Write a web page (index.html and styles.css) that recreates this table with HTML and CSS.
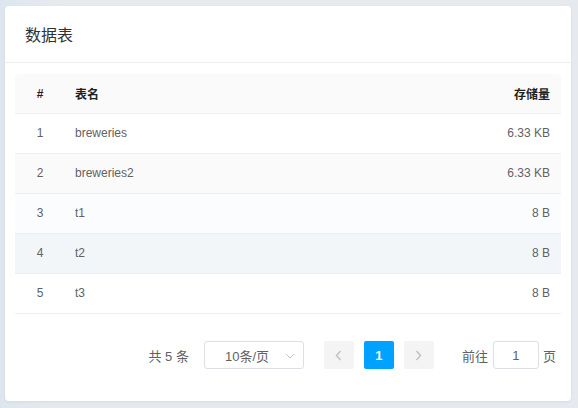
FILE: index.html
```html
<!DOCTYPE html>
<html lang="zh">
<head>
<meta charset="utf-8">
<link rel="stylesheet" href="styles.css">
</head>
<body>
<div class="card">
  <div class="card-header">数据表</div>
  <div class="card-body">
    <table class="tbl">
      <thead>
        <tr><th class="c-idx">#</th><th class="c-name">表名</th><th class="c-size">存储量</th></tr>
      </thead>
      <tbody>
        <tr class="r-white"><td class="c-idx">1</td><td class="c-name">breweries</td><td class="c-size">6.33 KB</td></tr>
        <tr class="r-stripe"><td class="c-idx">2</td><td class="c-name">breweries2</td><td class="c-size">6.33 KB</td></tr>
        <tr class="r-light"><td class="c-idx">3</td><td class="c-name">t1</td><td class="c-size">8 B</td></tr>
        <tr class="r-hover"><td class="c-idx">4</td><td class="c-name">t2</td><td class="c-size">8 B</td></tr>
        <tr class="r-white"><td class="c-idx">5</td><td class="c-name">t3</td><td class="c-size">8 B</td></tr>
      </tbody>
    </table>
    <div class="pager">
      <span class="total">共 5 条</span>
      <div class="sizes"><span class="sizes-text">10条/页</span><svg class="caret" width="10" height="6" viewBox="0 0 10 6"><path d="M1 1l4 4 4-4" fill="none" stroke="#c0c4cc" stroke-width="1"/></svg></div>
      <button class="pbtn prev"><svg width="7" height="11" viewBox="0 0 7 11"><path d="M5.5 1L1.5 5.5l4 4.5" fill="none" stroke="#c0c4cc" stroke-width="1.6"/></svg></button>
      <button class="pbtn active">1</button>
      <button class="pbtn next"><svg width="7" height="11" viewBox="0 0 7 11"><path d="M1.5 1l4 4.5-4 4.5" fill="none" stroke="#c0c4cc" stroke-width="1.6"/></svg></button>
      <span class="jump">前往<span class="jump-input">1</span>页</span>
    </div>
  </div>
</div>
</body>
</html>
```

FILE: styles.css
```css
html, body {
  margin: 0;
  padding: 0;
}
body {
  background: linear-gradient(90deg, #dde6ee 0%, #e6eaee 10%, #e6e9ed 100%);
  width: 578px;
  height: 408px;
  padding: 6px 7px 0 5px;
  box-sizing: border-box;
  font-family: "Liberation Sans", Arial, "Noto Sans CJK SC", sans-serif;
}
.card {
  background: #fff;
  border-radius: 4px;
  height: 395px;
  box-sizing: border-box;
  box-shadow: 0 1px 3px rgba(0, 0, 0, 0.06);
}
.card-header {
  height: 56px;
  border-bottom: 1px solid #ebeef5;
  padding: 0 20px;
  display: flex;
  align-items: center;
  font-size: 16px;
  color: #303133;
  font-family: "Noto Sans CJK SC", sans-serif;
}
.card-body {
  padding: 11px 10px 0 10px;
}
.tbl {
  width: 100%;
  border-collapse: separate;
  border-spacing: 0;
  font-size: 12px;
  color: #606266;
}
.tbl th, .tbl td {
  height: 39px;
  padding: 0 10px;
  border-bottom: 1px solid #ebeef5;
  box-sizing: content-box;
}
.tbl td {
  padding-bottom: 1px;
  height: 38px;
}
.tbl th {
  background: #fafafa;
  color: #1f1f1f;
  font-weight: bold;
  font-family: "Liberation Sans", "Noto Sans CJK SC", sans-serif;
}
.tbl th:first-child { border-top-left-radius: 4px; }
.tbl th:last-child { border-top-right-radius: 4px; }
.c-idx { width: 30px; text-align: center; }
.c-name { text-align: left; }
.c-size { text-align: right; padding-right: 11px !important; }
.r-white td { background: #fff; }
.r-stripe td { background: #fafafa; }
.r-light td { background: #fafcfe; }
.r-hover td { background: #f3f6f9; }
.pager {
  display: flex;
  justify-content: flex-end;
  align-items: center;
  margin-top: 27px;
  padding-right: 5px;
  height: 28px;
  font-size: 13px;
  color: #606266;
  font-family: "Liberation Sans", "Noto Sans CJK SC", sans-serif;
}
.total {
  margin-right: 15px;
}
.sizes {
  width: 100px;
  height: 28px;
  box-sizing: border-box;
  border: 1px solid #dcdfe6;
  border-radius: 3px;
  display: flex;
  align-items: center;
  position: relative;
  margin-right: 15px;
}
.sizes-text {
  flex: 1;
  text-align: center;
  padding-right: 18px;
  padding-left: 4px;
}
.caret {
  position: absolute;
  right: 8px;
  top: 11px;
}
.pbtn {
  width: 30px;
  height: 28px;
  margin: 0 5px;
  border: none;
  border-radius: 2px;
  background: #f4f4f5;
  padding: 0;
  display: flex;
  align-items: center;
  justify-content: center;
  font-family: "Liberation Sans", sans-serif;
  font-size: 13px;
  font-weight: bold;
  color: #606266;
}
.pbtn.active {
  background: #00a2ff;
  color: #fff;
}
.jump {
  margin-left: 23px;
  display: flex;
  align-items: center;
}
.jump-input {
  width: 46px;
  height: 28px;
  box-sizing: border-box;
  border: 1px solid #dcdfe6;
  border-radius: 3px;
  margin: 0 4px 0 5px;
  display: flex;
  align-items: center;
  justify-content: center;
}
```
